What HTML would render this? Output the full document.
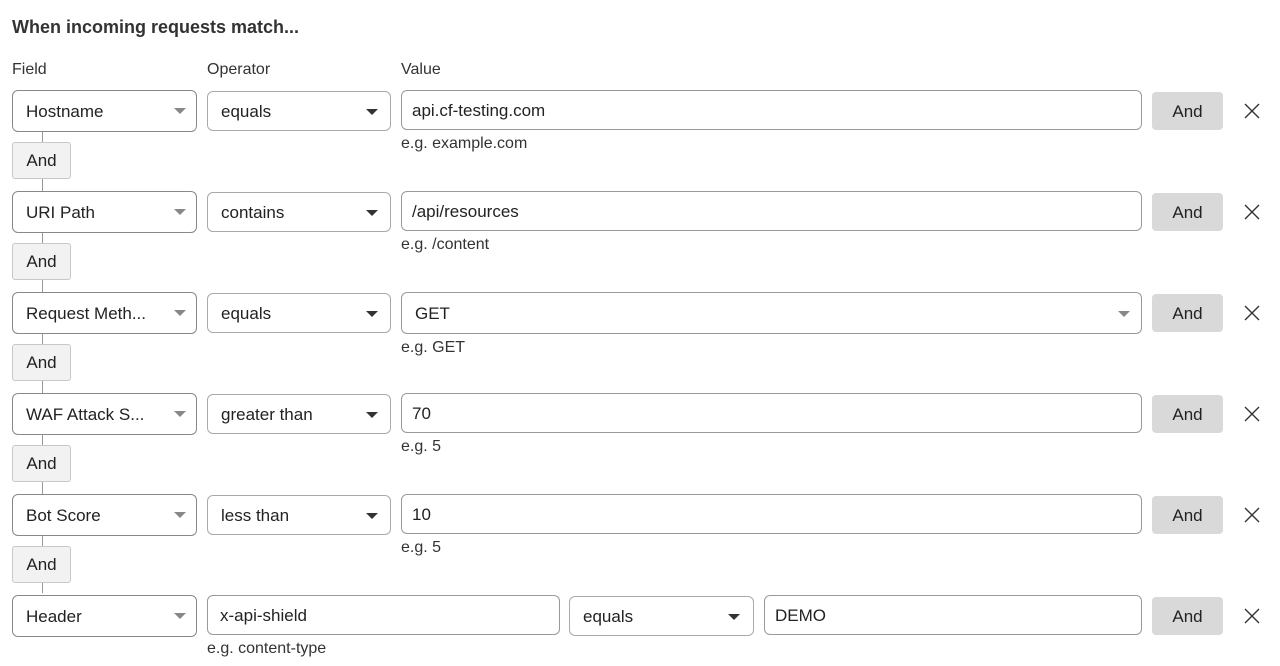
<!DOCTYPE html><html><head><style>
body{margin:0;width:1280px;height:666px;background:#fff;font-family:"Liberation Sans",sans-serif;color:#222;position:relative;overflow:hidden}
.a{position:absolute}
.box{position:absolute;height:40px;border:1px solid #999;border-radius:6px;box-sizing:border-box;font-size:17px;line-height:39px;padding-left:13px;background:#fff;white-space:nowrap}
.f{left:12px;width:185px;height:42px;line-height:41px;border-color:#888}
.o{left:207px;width:184px;border-color:#aaa}
.v{left:401px;width:741px;padding-left:10px}
.tri{position:absolute;top:17px;width:0;height:0;border-left:6px solid transparent;border-right:6px solid transparent;border-top:6px solid #333}
.g{border-top-color:#888}
.and{position:absolute;left:1152px;width:71px;height:38px;background:#d9d9d9;border-radius:4px;font-size:17px;line-height:39px;text-align:center}
.x{position:absolute;left:1244px;width:16px;height:16px}
.hint{position:absolute;font-size:16px;color:#333}
.sa{position:absolute;left:12px;width:59px;height:37px;background:#f2f2f2;border:1px solid #c8c8c8;border-radius:3px;box-sizing:border-box;font-size:17px;line-height:36px;text-align:center}
.ln{position:absolute;left:42px;width:1px;background:#999}
</style></head><body>
<div class="a" style="left:12px;top:17px;font-size:18px;font-weight:bold;color:#333">When incoming requests match...</div>
<div class="a" style="left:12px;top:61px;font-size:16px;color:#333">Field</div>
<div class="a" style="left:207px;top:61px;font-size:16px;color:#333">Operator</div>
<div class="a" style="left:401px;top:61px;font-size:16px;color:#333">Value</div>

<div class="ln" style="top:131px;height:462px"></div>

<div class="box f" style="top:90px">Hostname<span class="tri g" style="left:161px"></span></div>
<div class="box o" style="top:91px">equals<span class="tri" style="left:158px"></span></div>
<div class="box v" style="top:90px">api.cf-testing.com</div>
<div class="hint" style="left:401px;top:135px">e.g. example.com</div>
<div class="and" style="top:92px">And</div>
<svg class="x" style="top:103px" viewBox="0 0 16 16"><path d="M1 1L15 15M15 1L1 15" stroke="#333" stroke-width="1.4"/></svg>
<div class="sa" style="top:142px">And</div>

<div class="box f" style="top:191px">URI Path<span class="tri g" style="left:161px"></span></div>
<div class="box o" style="top:192px">contains<span class="tri" style="left:158px"></span></div>
<div class="box v" style="top:191px">/api/resources</div>
<div class="hint" style="left:401px;top:236px">e.g. /content</div>
<div class="and" style="top:193px">And</div>
<svg class="x" style="top:204px" viewBox="0 0 16 16"><path d="M1 1L15 15M15 1L1 15" stroke="#333" stroke-width="1.4"/></svg>
<div class="sa" style="top:243px">And</div>

<div class="box f" style="top:292px">Request Meth...<span class="tri g" style="left:161px"></span></div>
<div class="box o" style="top:293px">equals<span class="tri" style="left:158px"></span></div>
<div class="box v" style="top:292px;height:42px;line-height:41px;padding-left:13px">GET<span class="tri g" style="left:716px;top:18px"></span></div>
<div class="hint" style="left:401px;top:339px">e.g. GET</div>
<div class="and" style="top:294px">And</div>
<svg class="x" style="top:305px" viewBox="0 0 16 16"><path d="M1 1L15 15M15 1L1 15" stroke="#333" stroke-width="1.4"/></svg>
<div class="sa" style="top:344px">And</div>

<div class="box f" style="top:393px">WAF Attack S...<span class="tri g" style="left:161px"></span></div>
<div class="box o" style="top:394px">greater than<span class="tri" style="left:158px"></span></div>
<div class="box v" style="top:393px">70</div>
<div class="hint" style="left:401px;top:438px">e.g. 5</div>
<div class="and" style="top:395px">And</div>
<svg class="x" style="top:406px" viewBox="0 0 16 16"><path d="M1 1L15 15M15 1L1 15" stroke="#333" stroke-width="1.4"/></svg>
<div class="sa" style="top:445px">And</div>

<div class="box f" style="top:494px">Bot Score<span class="tri g" style="left:161px"></span></div>
<div class="box o" style="top:495px">less than<span class="tri" style="left:158px"></span></div>
<div class="box v" style="top:494px">10</div>
<div class="hint" style="left:401px;top:539px">e.g. 5</div>
<div class="and" style="top:496px">And</div>
<svg class="x" style="top:507px" viewBox="0 0 16 16"><path d="M1 1L15 15M15 1L1 15" stroke="#333" stroke-width="1.4"/></svg>
<div class="sa" style="top:546px">And</div>

<div class="box f" style="top:595px">Header<span class="tri g" style="left:161px"></span></div>
<div class="box" style="top:595px;left:207px;width:353px;padding-left:12px">x-api-shield</div>
<div class="box o" style="top:596px;left:569px;width:185px">equals<span class="tri" style="left:158px"></span></div>
<div class="box" style="top:595px;left:764px;width:378px;padding-left:10px">DEMO</div>
<div class="hint" style="left:207px;top:640px">e.g. content-type</div>
<div class="and" style="top:597px">And</div>
<svg class="x" style="top:608px" viewBox="0 0 16 16"><path d="M1 1L15 15M15 1L1 15" stroke="#333" stroke-width="1.4"/></svg>
</body></html>
